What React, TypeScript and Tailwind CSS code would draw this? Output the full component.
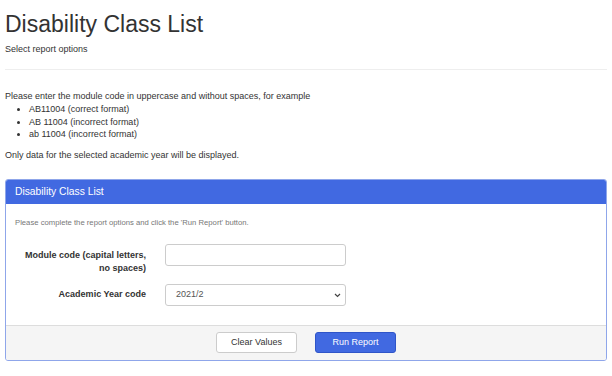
import React from 'react'

const font = { fontFamily: '"Liberation Sans", Arial, sans-serif' }

export default function App() {
  return (
    <div className="w-[612px] h-[376px] bg-white text-[#333] overflow-hidden px-[5px]" style={font}>
      <h1 className="mt-[12px] text-[23px] leading-[25px] font-normal">Disability Class List</h1>
      <p className="mt-[6px] text-[9px] leading-[13px]">Select report options</p>
      <hr className="mt-[13px] border-t border-[#eee]" />

      <div className="mt-[20px] text-[9px] leading-[12.8px]">
        <p>Please enter the module code in uppercase and without spaces, for example</p>
        <ul className="list-disc pl-[24px]">
          <li>AB11004 (correct format)</li>
          <li>AB 11004 (incorrect format)</li>
          <li>ab 11004 (incorrect format)</li>
        </ul>
        <p className="mt-[8px]">Only data for the selected academic year will be displayed.</p>
      </div>

      <div className="mt-[17px] w-[602px] border border-[#8fa6ea] rounded-[3px] overflow-hidden">
        <div className="h-[24px] bg-[#4169e1] text-white text-[10.3px] px-[9px] flex items-center">
          Disability Class List
        </div>
        <div className="px-[9px] pt-[13px] pb-[19px]">
          <p className="text-[7.7px] leading-[11px] text-[#777]">
            Please complete the report options and click the 'Run Report' button.
          </p>
          <form className="mt-[16px] flex flex-col gap-[9px]">
            <div className="flex items-start gap-[19px]">
              <label className="w-[131px] text-right font-bold text-[9px] leading-[13px] pt-[5px]">
                Module code (capital letters, no spaces)
              </label>
              <input
                type="text"
                className="w-[181px] h-[22px] border border-[#ccc] rounded-[3px] bg-white outline-none"
              />
            </div>
            <div className="flex items-center gap-[19px]">
              <label className="w-[131px] text-right font-bold text-[9px] leading-[13px]">
                Academic Year code
              </label>
              <div className="relative w-[181px] h-[22px] border border-[#ccc] rounded-[3px] bg-white flex items-center pl-[10px] text-[9px] text-[#555]">
                2021/2
                <svg className="absolute right-[4px] top-[8px]" width="7" height="5" viewBox="0 0 7 5">
                  <path d="M1 1 L3.5 3.5 L6 1" fill="none" stroke="#444" strokeWidth="1.2" />
                </svg>
              </div>
            </div>
          </form>
        </div>
        <div className="h-[35px] bg-[#f5f5f5] border-t border-[#ddd] flex items-center justify-center gap-[18px]">
          <button className="w-[81px] h-[21px] bg-white border border-[#ccc] rounded-[3px] text-[9px] text-[#333]">
            Clear Values
          </button>
          <button className="w-[81px] h-[21px] bg-[#4169e1] border border-[#2f55c8] rounded-[3px] text-[9px] text-white">
            Run Report
          </button>
        </div>
      </div>
    </div>
  )
}
